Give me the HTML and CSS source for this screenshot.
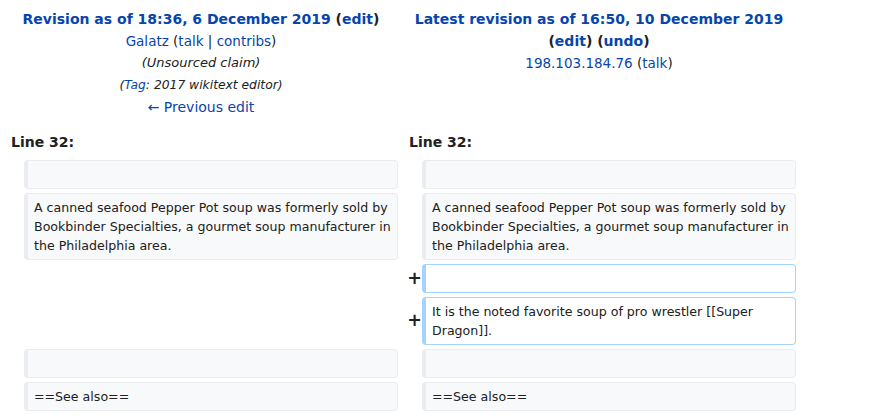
FILE: index.html
```html
<!DOCTYPE html>
<html lang="en">
<head>
<meta charset="utf-8">
<title>Pepper Pot soup: Difference between revisions</title>
<link rel="stylesheet" href="styles.css">
</head>
<body>
<div class="diff">
  <div class="title title-old">
    <div><strong><a class="link" href="#">Revision as of 18:36, 6 December 2019</a> <span class="paren">(<a class="link" href="#">edit</a>)</span></strong></div>
    <div class="user"><a class="link" href="#">Galatz</a> <span class="tools">(<a class="link" href="#">talk</a> | <a class="link" href="#">contribs</a>)</span></div>
    <div class="comment">(Unsourced claim)</div>
    <div class="tags">(<a class="link" href="#">Tag</a>: 2017 wikitext editor)</div>
    <div><a class="link" href="#">← Previous edit</a></div>
  </div>
  <div class="title title-new">
    <div><strong><a class="link" href="#">Latest revision as of 16:50, 10 December 2019</a> <span class="paren">(<a class="link" href="#">edit</a>)</span> <span class="paren">(<a class="link" href="#">undo</a>)</span></strong></div>
    <div class="user"><a class="link" href="#">198.103.184.76</a> <span class="tools">(<a class="link" href="#">talk</a>)</span></div>
  </div>

  <div class="lineno">Line 32:</div>
  <div class="lineno">Line 32:</div>

  <div class="marker"></div>
  <div class="cell context"><div class="text"></div></div>
  <div class="marker"></div>
  <div class="cell context"><div class="text"></div></div>

  <div class="marker"></div>
  <div class="cell context"><div class="text">A canned seafood Pepper Pot soup was formerly sold by Bookbinder Specialties, a gourmet soup manufacturer in the Philadelphia area.</div></div>
  <div class="marker"></div>
  <div class="cell context"><div class="text">A canned seafood Pepper Pot soup was formerly sold by Bookbinder Specialties, a gourmet soup manufacturer in the Philadelphia area.</div></div>

  <div class="empty"></div>
  <div class="marker"><span class="sign">+</span></div>
  <div class="cell added"><div class="text"></div></div>

  <div class="empty"></div>
  <div class="marker"><span class="sign">+</span></div>
  <div class="cell added"><div class="text">It is the noted favorite soup of pro wrestler [[Super Dragon]].</div></div>

  <div class="marker"></div>
  <div class="cell context"><div class="text"></div></div>
  <div class="marker"></div>
  <div class="cell context"><div class="text"></div></div>

  <div class="marker"></div>
  <div class="cell context"><div class="text">==See also==</div></div>
  <div class="marker"></div>
  <div class="cell context"><div class="text">==See also==</div></div>
</div>
</body>
</html>
```
FILE: styles.css
```css
html, body {
  margin: 0;
  padding: 0;
  background: #ffffff;
}

body {
  font-family: "DejaVu Sans", sans-serif;
  font-size: 14px;
  color: #202122;
}

.diff {
  width: 800px;
  box-sizing: border-box;
  padding: 4px;
  display: grid;
  grid-template-columns: 16px 374px 16px 374px;
  column-gap: 4px;
  row-gap: 4px;
  align-items: stretch;
}

.link {
  color: #0645ad;
  text-decoration: none;
}

.title {
  grid-column: span 2;
  text-align: center;
  line-height: 22px;
  padding: 4px 0;
}

.title strong {
  font-weight: bold;
}

.paren {
  color: #202122;
}

.user {
  font-size: 13.5px;
}

.tools {
  color: #202122;
}

.comment {
  font-style: italic;
  font-size: 13px;
  color: #202122;
}

.tags {
  font-style: italic;
  font-size: 12.3px;
  color: #202122;
}

.lineno {
  grid-column: span 2;
  font-weight: bold;
  line-height: 22px;
  padding: 5px 0 3px 7px;
}

.marker {
  display: flex;
  align-items: center;
  justify-content: flex-end;
  font-weight: bold;
  font-size: 17.5px;
  line-height: 1;
  color: #202122;
}

.sign {
  margin-right: -4px;
}

.empty {
  grid-column: span 2;
}

.cell {
  font-size: 12.6px;
  line-height: 19px;
  border-style: solid;
  border-width: 1px 1px 1px 4px;
  border-radius: 4px;
  padding: 4px 5px 4px 6px;
  white-space: pre-wrap;
  overflow-wrap: break-word;
}

.text {
  min-height: 19px;
}

.context {
  background: #f8f9fa;
  border-color: #eaecf0;
  color: #202122;
}

.added {
  background: #ffffff;
  border-color: #a3d3ff;
  color: #202122;
}
```
